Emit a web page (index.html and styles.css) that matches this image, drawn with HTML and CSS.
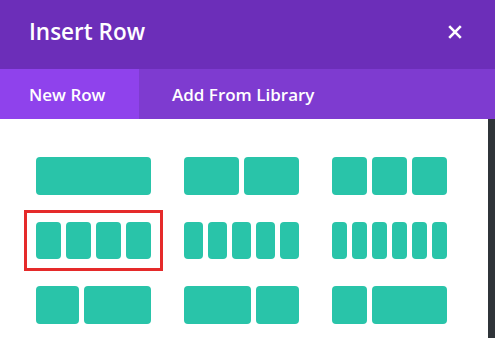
FILE: index.html
```html
<!DOCTYPE html>
<html>
<head>
<meta charset="utf-8">
<link rel="stylesheet" href="styles.css">
</head>
<body>
<div class="modal">
  <header class="header">
    <h1 class="title">Insert Row</h1>
    <button class="close" aria-label="Close">
      <svg width="14" height="14" viewBox="0 0 14 14"><path d="M1.2 1.2 L12.8 12.8 M12.8 1.2 L1.2 12.8" stroke="#fff" stroke-width="2.6" stroke-linecap="butt"/></svg>
    </button>
  </header>
  <nav class="tabs">
    <div class="tab active">New Row</div>
    <div class="tab">Add From Library</div>
  </nav>
  <div class="body">
    <div class="content">
      <div class="grid">
        <div class="layout"><span class="col" style="flex:1"></span></div>
        <div class="layout"><span class="col" style="flex:1"></span><span class="col" style="flex:1"></span></div>
        <div class="layout"><span class="col" style="flex:1"></span><span class="col" style="flex:1"></span><span class="col" style="flex:1"></span></div>

        <div class="layout selected"><span class="col" style="flex:1"></span><span class="col" style="flex:1"></span><span class="col" style="flex:1"></span><span class="col" style="flex:1"></span></div>
        <div class="layout"><span class="col" style="flex:1"></span><span class="col" style="flex:1"></span><span class="col" style="flex:1"></span><span class="col" style="flex:1"></span><span class="col" style="flex:1"></span></div>
        <div class="layout"><span class="col" style="flex:1"></span><span class="col" style="flex:1"></span><span class="col" style="flex:1"></span><span class="col" style="flex:1"></span><span class="col" style="flex:1"></span><span class="col" style="flex:1"></span></div>

        <div class="layout"><span class="col" style="flex:43"></span><span class="col" style="flex:67"></span></div>
        <div class="layout"><span class="col" style="flex:67"></span><span class="col" style="flex:43"></span></div>
        <div class="layout"><span class="col" style="flex:35"></span><span class="col" style="flex:75"></span></div>
      </div>
    </div>
    <div class="side"></div>
  </div>
</div>
</body>
</html>
```
FILE: styles.css
```css
* { box-sizing: border-box; }
html, body { margin: 0; padding: 0; }
body {
  width: 495px;
  height: 338px;
  overflow: hidden;
  background: #fff;
  font-family: "Open Sans", "Noto Sans", sans-serif;
}
.modal { display: flex; flex-direction: column; height: 338px; }
.header {
  height: 69px;
  background: #6c2eb9;
  display: flex;
  align-items: center;
  justify-content: space-between;
  padding: 0 33px 0 29px;
}
.title {
  margin: 0;
  color: #fff;
  font-size: 22.5px;
  font-weight: 600;
  line-height: 1;
  padding-bottom: 4px;
}
.close {
  border: 0;
  background: none;
  padding: 0;
  width: 14px;
  height: 14px;
  display: flex;
  margin-bottom: 6px;
}
.tabs {
  height: 50px;
  background: #7e3bd0;
  display: flex;
}
.tab {
  color: #fff;
  font-size: 17px;
  font-weight: 600;
  display: flex;
  align-items: center;
  padding: 0 33px 0 33px;
}
.tab.active {
  background: #8f42ec;
  width: 139px;
  padding-left: 29px;
}
.body { flex: 1; display: flex; }
.content { flex: 1; background: #fff; padding: 38px 0 0 36px; }
.side { width: 7px; background: #2f3439; }
.grid {
  display: grid;
  grid-template-columns: repeat(3, 115px);
  grid-auto-rows: 37.5px;
  column-gap: 33px;
  row-gap: 27px;
}
.layout { display: flex; gap: 5px; }
.col { background: #29c4a9; border-radius: 4px; }
.selected { outline: 3px solid #e52a2a; outline-offset: 9px; }
```
